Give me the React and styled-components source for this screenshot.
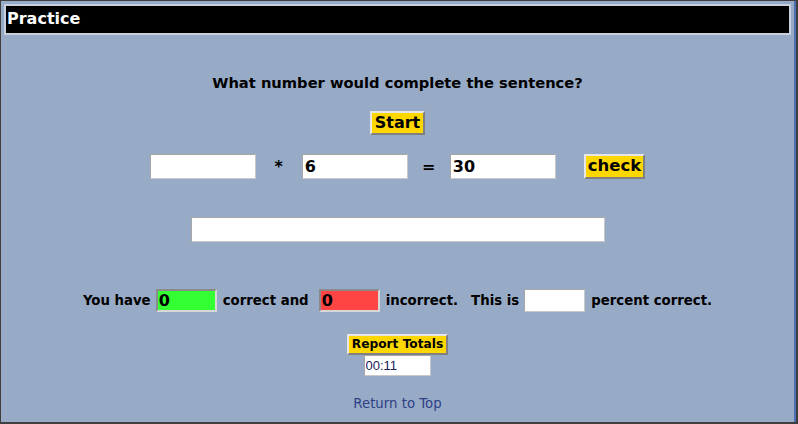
import React from "react";
import styled, { createGlobalStyle } from "styled-components";

const Global = createGlobalStyle`
  html, body { margin: 0; padding: 0; }
  body { font-family: "DejaVu Sans", Verdana, sans-serif; }
  * { box-sizing: border-box; }
`;

const Panel = styled.div`
  width: 798px;
  height: 424px;
  background: #98abc6;
  border-top: 1px solid #3f3f3f;
  border-left: 1px solid #3f3f3f;
  border-bottom: 2px solid #3f3f3f;
  border-right: 2px solid #3f3f3f;
  box-shadow: inset -2px 0 0 #4a6fb3;
  padding: 3px 5px 0 3px;
  display: flex;
  flex-direction: column;
`;

const Header = styled.div`
  height: 31px;
  background: #000;
  border: 2px solid #c8d0de;
  color: #fff;
  font-weight: bold;
  font-size: 16px;
  line-height: 25px;
  padding-left: 1px;
`;

const Body = styled.div`
  display: flex;
  flex-direction: column;
  align-items: center;
  color: #000;
`;

const Question = styled.div`
  margin-top: 39px;
  font-weight: bold;
  font-size: 14.7px;
  line-height: 18px;
`;

const GoldButton = styled.button`
  font-family: "DejaVu Sans", Verdana, sans-serif;
  font-weight: bold;
  font-size: ${(p) => p.$size || 16}px;
  line-height: 1;
  background: #ffd700;
  color: #000;
  border: 2px solid;
  border-color: #e6e6e6 #808080 #808080 #e6e6e6;
  padding: 0 2px;
  height: ${(p) => p.$h || 24}px;
  margin: 0;
  cursor: pointer;
`;

const StartButton = styled(GoldButton)`
  margin-top: 19px;
  padding: 0 3px;
`;

const EquationRow = styled.div`
  display: flex;
  align-items: center;
  margin-top: 19px;
`;

const Field = styled.input`
  width: ${(p) => p.$w || 106}px;
  height: ${(p) => p.$h || 25}px;
  border: 1px solid;
  border-color: #a6a6a6 #c8c8c8 #c8c8c8 #a6a6a6;
  background: ${(p) => p.$bg || "#fff"};
  font-family: "DejaVu Sans", Verdana, sans-serif;
  font-weight: bold;
  font-size: 16px;
  color: #000;
  padding: 0 2px;
  margin: 0;
  outline: none;
`;

const Operator = styled.span`
  font-weight: bold;
  font-size: 16px;
  width: ${(p) => p.$w || 46}px;
  text-align: center;
`;

const CheckButton = styled(GoldButton)`
  margin-left: 28px;
  height: 25px;
  font-size: 16.5px;
`;

const WideField = styled(Field)`
  margin-top: 38px;
`;

const StatsRow = styled.div`
  display: flex;
  align-items: center;
  margin-top: 47px;
  font-weight: bold;
  font-size: 13.3px;
`;

const StatBox = styled.input`
  width: 61px;
  height: 23px;
  border-style: solid;
  border-color: ${(p) => (p.$colored ? "#8a8a8a #d8d8d8 #d8d8d8 #8a8a8a" : "#a6a6a6 #c8c8c8 #c8c8c8 #a6a6a6")};
  border-width: ${(p) => (p.$colored ? "2px" : "1px")};
  background: ${(p) => p.$bg || "#fff"};
  font-family: "DejaVu Sans", Verdana, sans-serif;
  font-weight: bold;
  font-size: 16px;
  color: #000;
  padding: 0 1px;
  margin: 0 6px 0 5px;
  outline: none;
`;

const Gap = styled.span`
  display: inline-block;
  width: ${(p) => p.$w}px;
`;

const ReportButton = styled(GoldButton)`
  margin-top: 22px;
  padding: 0 3px;
  height: 21px;
  font-size: 12.2px;
`;

const Timer = styled.input`
  width: 67px;
  height: 21px;
  border: 1px solid;
  border-color: #a6a6a6 #c8c8c8 #c8c8c8 #a6a6a6;
  background: #fff;
  font-family: "Liberation Sans", Arial, sans-serif;
  font-size: 13px;
  color: #1a1a5a;
  padding: 0 1px;
  margin: 0 0 0 -1px;
  outline: none;
`;

const TopLink = styled.a`
  margin-top: 20px;
  font-size: 13.3px;
  color: #2f3f86;
  text-decoration: none;
`;

export default function App() {
  return (
    <>
      <Global />
      <Panel>
        <Header>Practice</Header>
        <Body>
          <Question>What number would complete the sentence?</Question>
          <StartButton>Start</StartButton>
          <EquationRow>
            <Field defaultValue="" />
            <Operator $w={46}>*</Operator>
            <Field defaultValue="6" />
            <Operator $w={42}>=</Operator>
            <Field defaultValue="30" />
            <CheckButton>check</CheckButton>
          </EquationRow>
          <WideField $w={414} defaultValue="" />
          <StatsRow>
            You have
            <StatBox $colored $bg="#33ff33" defaultValue="0" />
            correct and
            <Gap $w={5} />
            <StatBox $colored $bg="#ff4444" defaultValue="0" />
            incorrect.
            <Gap $w={13} />
            This is
            <StatBox defaultValue="" />
            percent correct.
          </StatsRow>
          <ReportButton>Report Totals</ReportButton>
          <Timer defaultValue="00:11" />
          <TopLink href="#">Return to Top</TopLink>
        </Body>
      </Panel>
    </>
  );
}
